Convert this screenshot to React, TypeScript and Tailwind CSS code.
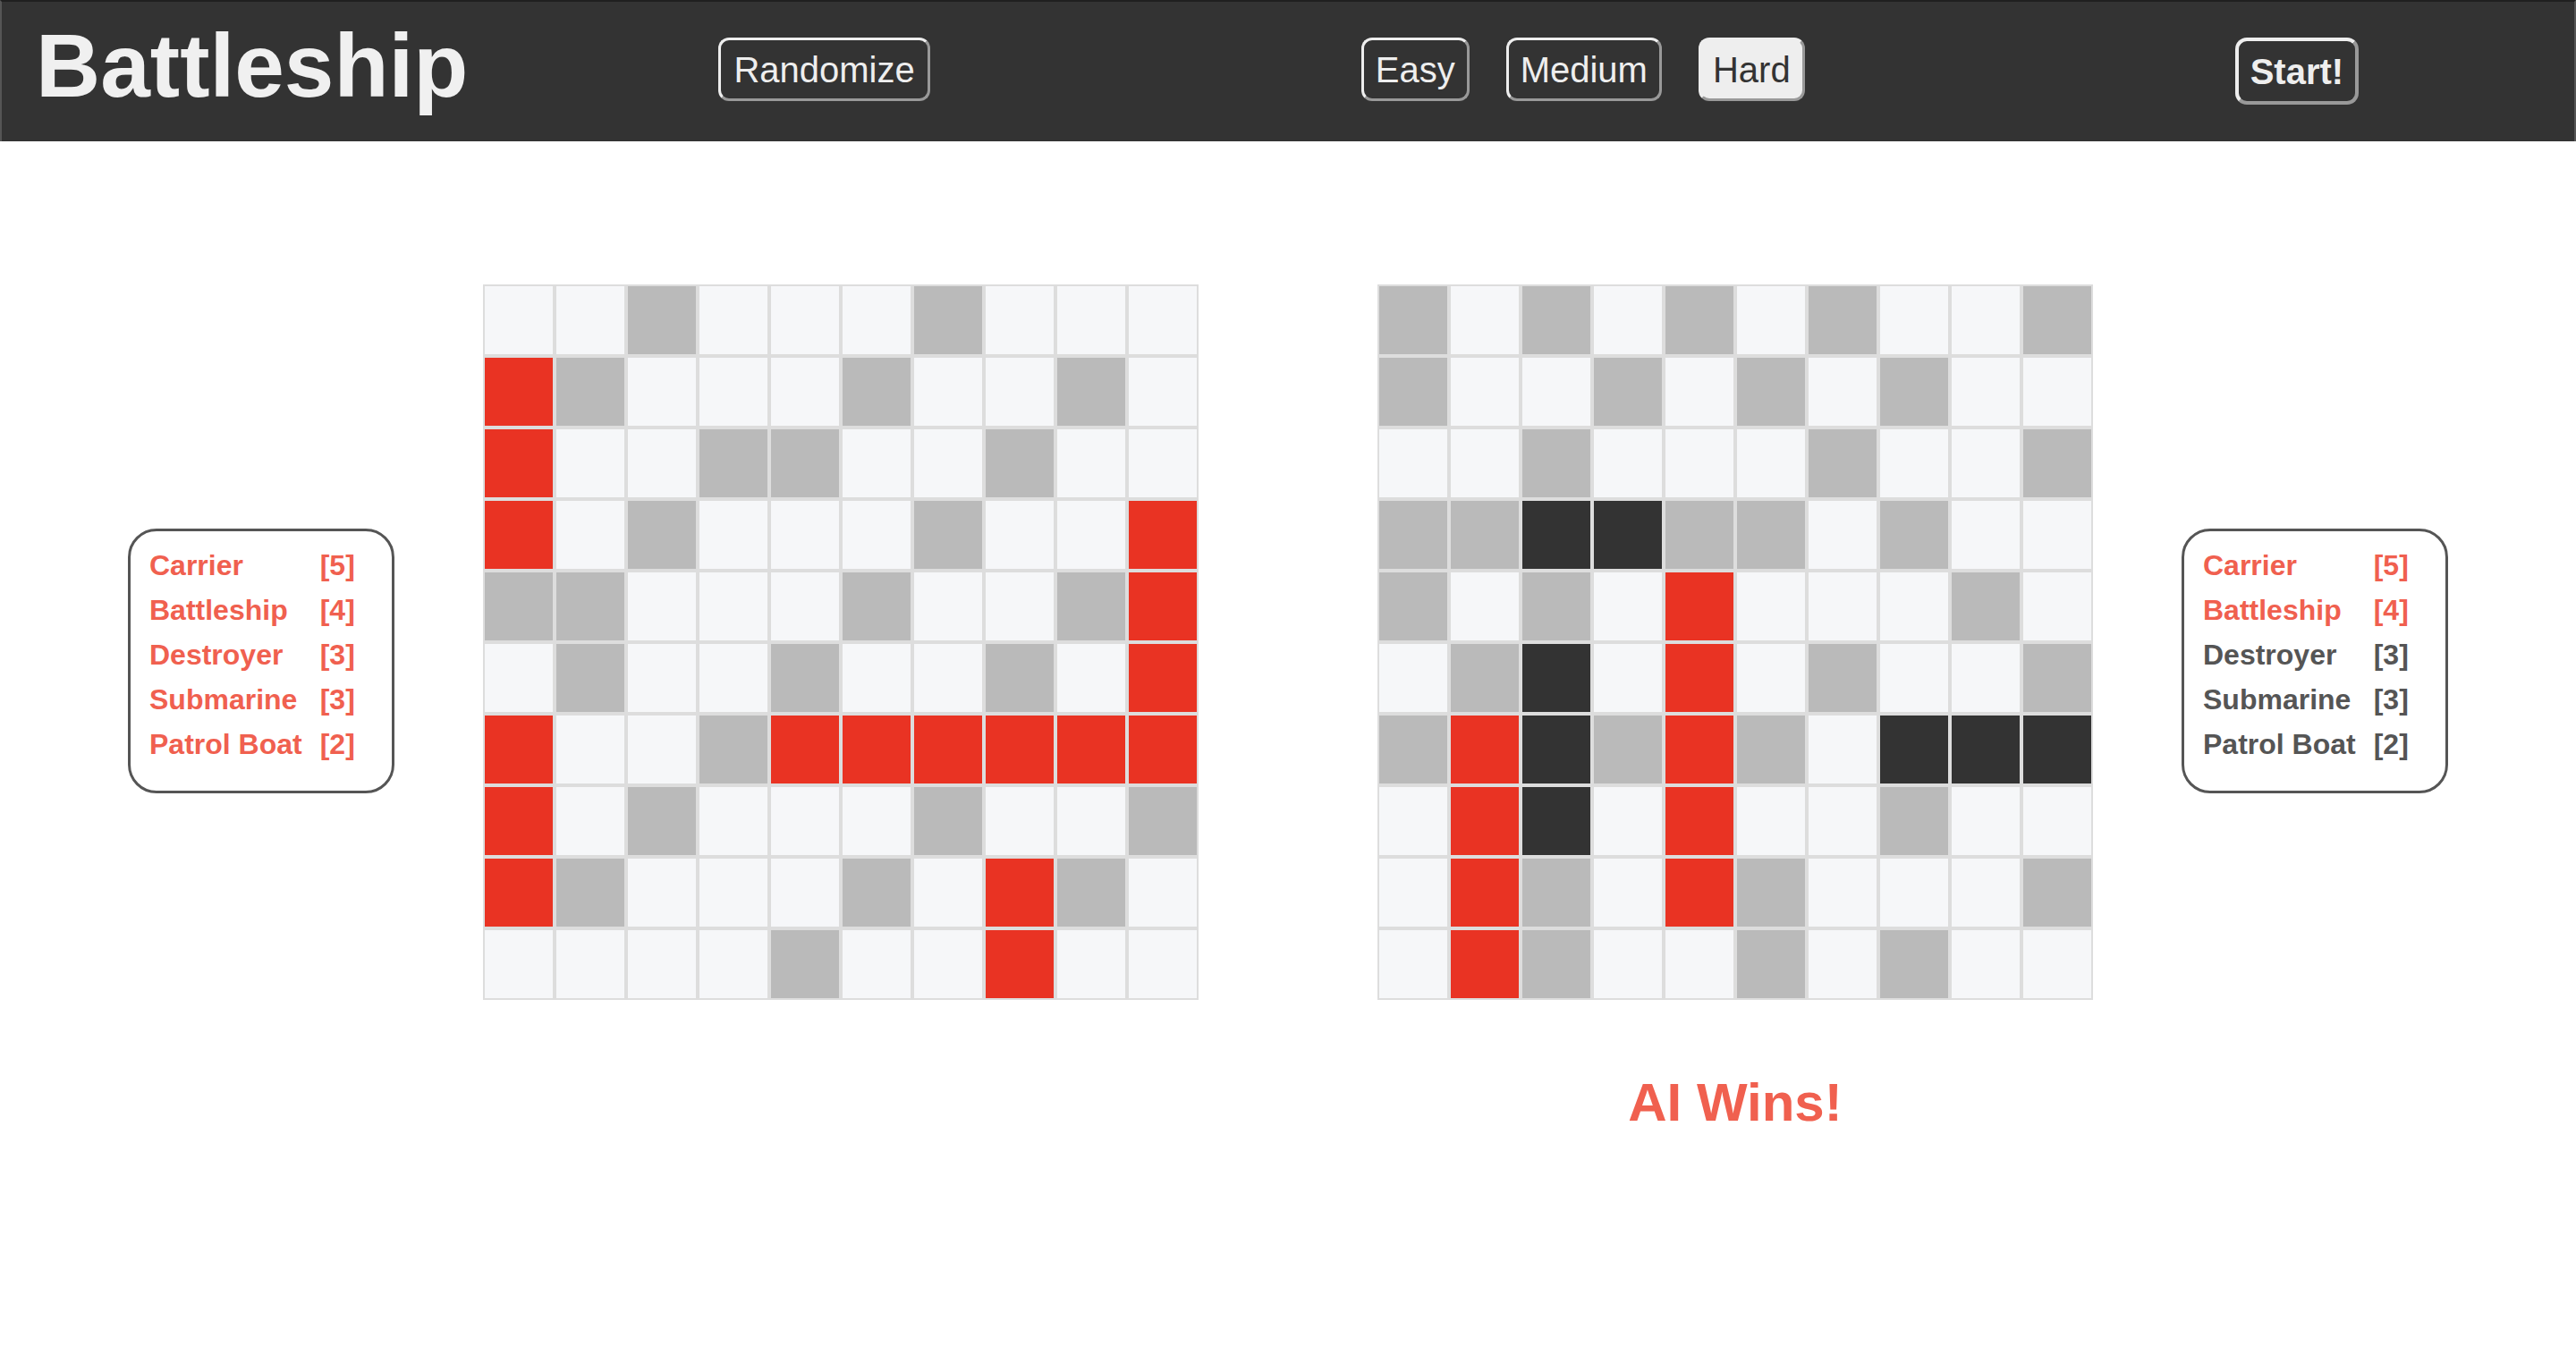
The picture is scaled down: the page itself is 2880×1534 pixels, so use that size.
import React from "react";

type Cell = "L" | "G" | "R" | "D";

const leftGrid: string[] = [
  "LLGLLLGLLL",
  "RGLLLGLLGL",
  "RLLGGLLGLL",
  "RLGLLLGLLR",
  "GGLLLGLLGR",
  "LGLLGLLGLR",
  "RLLGRRRRRR",
  "RLGLLLGLLG",
  "RGLLLGLRGL",
  "LLLLGLLRLL",
];

const rightGrid: string[] = [
  "GLGLGLGLLG",
  "GLLGLGLGLL",
  "LLGLLLGLLG",
  "GGDDGGLGLL",
  "GLGLRLLLGL",
  "LGDLRLGLLG",
  "GRDGRGLDDD",
  "LRDLRLLGLL",
  "LRGLRGLLLG",
  "LRGLLGLGLL",
];

const cellClass: Record<Cell, string> = {
  L: "bg-[#f6f7f9]",
  G: "bg-[#bababa]",
  R: "bg-[#e93323]",
  D: "bg-[#333333]",
};

function Board({ rows }: { rows: string[] }) {
  return (
    <div className="grid grid-cols-10 w-[800px]">
      {rows.flatMap((row, r) =>
        row.split("").map((c, i) => (
          <div
            key={`${r}-${i}`}
            className={`w-[80px] h-[80px] border-2 border-[#dddddd] ${cellClass[c as Cell]}`}
          />
        ))
      )}
    </div>
  );
}

const ships: [string, number][] = [
  ["Carrier", 5],
  ["Battleship", 4],
  ["Destroyer", 3],
  ["Submarine", 3],
  ["Patrol Boat", 2],
];

function Legend({ sunk }: { sunk: boolean[] }) {
  return (
    <div className="w-[298px] h-[296px] mt-[273px] border-[3px] border-[#555555] rounded-[32px] pl-[21px] pt-[13px] shrink-0">
      <div className="grid grid-cols-[auto_auto] gap-x-[20px] w-fit text-[32px] leading-[50px] font-bold">
        {ships.map(([name, size], i) => (
          <React.Fragment key={name}>
            <div className={sunk[i] ? "text-[#f0604f]" : "text-[#555555]"}>{name}</div>
            <div className={sunk[i] ? "text-[#f0604f]" : "text-[#555555]"}>[{size}]</div>
          </React.Fragment>
        ))}
      </div>
    </div>
  );
}

const btnBase =
  "h-[71px] border-[3px] border-t-[#eeeeee] border-l-[#eeeeee] border-r-[#999999] border-b-[#999999] rounded-[12px] flex items-center text-[40px] leading-normal";

export default function App() {
  return (
    <div className="min-h-screen bg-white" style={{ fontFamily: '"Liberation Sans", Arial, sans-serif' }}>
      <header className="h-[158px] bg-[#333333] border-t-2 border-t-[#1f1f1f] border-l-2 border-l-[#555555] border-r-2 border-r-[#555555] flex items-start text-[#eeeeee]">
        <h1 className="ml-[38px] mt-[21px] text-[100px] leading-[100px] font-bold text-[#f0f0f0]">Battleship</h1>
        <div className="ml-[280px] mt-[40px]">
          <button className={`${btnBase} px-[14px] text-[#eeeeee]`}>Randomize</button>
        </div>
        <div className="ml-[482px] mt-[40px] flex gap-[41px]">
          <button className={`${btnBase} px-[13px] text-[#eeeeee]`}>Easy</button>
          <button className={`${btnBase} px-[13px] text-[#eeeeee]`}>Medium</button>
          <button className={`${btnBase} px-[13px] bg-[#eeeeee] text-[#333333]`}>Hard</button>
        </div>
        <div className="ml-[481px] mt-[40px]">
          <button className="h-[75px] border-4 border-t-[#eeeeee] border-l-[#eeeeee] border-r-[#999999] border-b-[#999999] rounded-[13px] px-[13px] flex items-center text-[40px] leading-normal font-bold text-[#eeeeee]">
            Start!
          </button>
        </div>
      </header>

      <main className="flex justify-center items-start pt-[160px]">
        <Legend sunk={[true, true, true, true, true]} />
        <div className="ml-[99px] mr-[100px] flex flex-col items-center">
          <Board rows={leftGrid} />
        </div>
        <div className="ml-[100px] mr-[99px] flex flex-col items-center">
          <Board rows={rightGrid} />
          <div className="mt-[70px] text-[60px] leading-normal font-bold text-[#f0604f]">AI Wins!</div>
        </div>
        <Legend sunk={[true, true, false, false, false]} />
      </main>
    </div>
  );
}
